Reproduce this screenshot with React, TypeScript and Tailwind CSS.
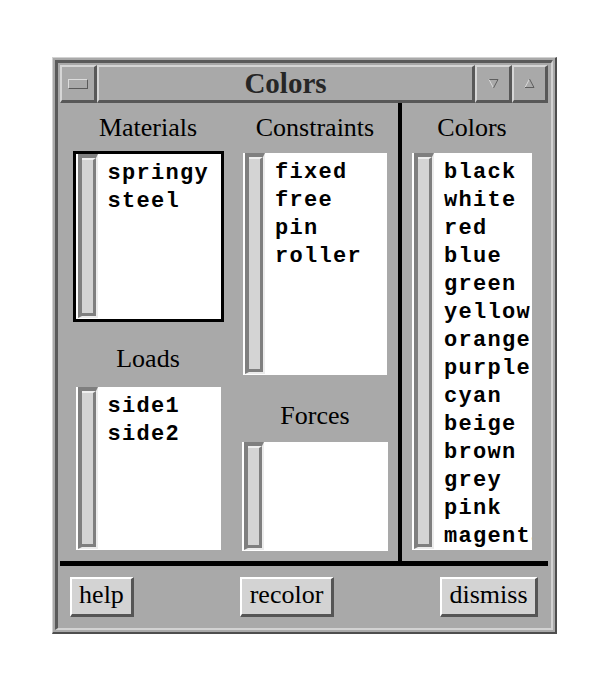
import React from "react";

const serif = "font-['Liberation_Serif','Times_New_Roman',serif]";
const mono = "font-['Liberation_Mono','Courier_New',monospace]";

// raised bevel used by the title bar pieces
const raised =
  "border-t-2 border-l-2 border-t-[#d6d6d6] border-l-[#d6d6d6] border-b-[3px] border-r-[3px] border-b-[#585858] border-r-[#585858]";

function Trough() {
  return (
    <div className="flex w-[20px] shrink-0 mb-[1px] border-t-[4px] border-l-[4px] border-b-[2px] border-r-[2px] border-t-[#7f7f7f] border-l-[#7f7f7f] border-b-[#ececec] border-r-[#ececec]">
      <div className="flex-1 bg-[#d4d4d4] border-t-[2px] border-t-[#efefef] border-r-[3px] border-b-[3px] border-r-[#7f7f7f] border-b-[#7f7f7f]" />
    </div>
  );
}

function ListBody({ items, className }: { items: string[]; className: string }) {
  return (
    <div className={`flex bg-white overflow-hidden ${className}`}>
      <Trough />
      <div className={`pl-[10px] pt-[6px] overflow-hidden whitespace-nowrap ${mono} font-bold text-[22px] leading-[28px] tracking-[1.3px] text-black`}>
        {items.map((it) => (
          <div key={it}>{it}</div>
        ))}
      </div>
    </div>
  );
}

function Label({ children }: { children: React.ReactNode }) {
  return <div className={`${serif} text-[26px] leading-[30px] h-[30px] text-black`}>{children}</div>;
}

function Button({ children, className }: { children: React.ReactNode; className: string }) {
  return (
    <div
      className={`flex items-center justify-center h-[40px] pb-[3px] bg-[#d3d3d3] border-t-2 border-l-2 border-t-white border-l-white border-b-[3px] border-r-[3px] border-b-[#555555] border-r-[#555555] ${serif} text-[26px] leading-[30px] text-black ${className}`}
    >
      {children}
    </div>
  );
}

export default function App() {
  const colors = [
    "black", "white", "red", "blue", "green", "yellow", "orange",
    "purple", "cyan", "beige", "brown", "grey", "pink", "magenta",
  ];

  return (
    <div className="min-h-[693px] bg-white pt-[57px] pl-[52px]">
      {/* window frame */}
      <div className="w-[505px] h-[577px] bg-[#a9a9a9] p-[2px] border-t border-l border-t-[#d2d2d2] border-l-[#d2d2d2] border-b-2 border-r-2 border-b-[#4e4e4e] border-r-[#4e4e4e]">
        <div className="h-full pt-[2px] pl-[2px] pr-[3px] pb-[3px] border-t-[3px] border-l-[3px] border-t-[#5a5a5a] border-l-[#5a5a5a] border-b-2 border-r-2 border-b-[#d2d2d2] border-r-[#d2d2d2]">
          <div className="flex flex-col h-full">
            {/* title bar */}
            <div className="flex h-[38px] shrink-0">
              <div className={`w-[37px] flex items-center justify-center ${raised}`}>
                <div className="w-[20px] h-[10px] border-t border-l border-t-[#dcdcdc] border-l-[#dcdcdc] border-b border-r border-b-[#5a5a5a] border-r-[#5a5a5a]" />
              </div>
              <div className={`flex-1 flex items-center justify-center ${raised}`}>
                <span className={`${serif} font-bold text-[29px] leading-none text-[#262626]`}>Colors</span>
              </div>
              <div className={`w-[37px] flex items-center justify-center ${raised}`}>
                <svg width="11" height="11" viewBox="0 0 11 11">
                  <line x1="1" y1="1.5" x2="10" y2="1.5" stroke="#5e5e5e" strokeWidth="1" />
                  <line x1="1" y1="1.5" x2="5.5" y2="10" stroke="#dadada" strokeWidth="1" />
                  <line x1="10" y1="1.5" x2="5.5" y2="10" stroke="#5e5e5e" strokeWidth="1" />
                </svg>
              </div>
              <div className={`w-[36px] flex items-center justify-center ${raised}`}>
                <svg width="11" height="11" viewBox="0 0 11 11">
                  <line x1="5.5" y1="1" x2="1" y2="9.5" stroke="#dadada" strokeWidth="1" />
                  <line x1="5.5" y1="1" x2="10" y2="9.5" stroke="#5e5e5e" strokeWidth="1" />
                  <line x1="1" y1="9.5" x2="10" y2="9.5" stroke="#5e5e5e" strokeWidth="1" />
                </svg>
              </div>
            </div>

            {/* panels */}
            <div className="flex h-[458px] shrink-0">
              <div className="flex w-[338px]">
                <div className="flex flex-col items-center w-[176px] pt-[10px]">
                  <Label>Materials</Label>
                  <div className="mt-[8px] w-[151px] h-[171px] border-[3px] border-black">
                    <ListBody items={["springy", "steel"]} className="h-full pl-[2px]" />
                  </div>
                  <div className="mt-[22px]">
                    <Label>Loads</Label>
                  </div>
                  <div className="mt-[10px] w-[151px] h-[169px] border-[3px] border-transparent">
                    <ListBody items={["side1", "side2"]} className="h-full pl-[2px]" />
                  </div>
                </div>
                <div className="flex flex-col items-center w-[158px] pt-[10px]">
                  <Label>Constraints</Label>
                  <ListBody items={["fixed", "free", "pin", "roller"]} className="mt-[10px] w-[144px] h-[222px] pl-[2px]" />
                  <div className="mt-[26px]">
                    <Label>Forces</Label>
                  </div>
                  <ListBody items={[]} className="mt-[11px] w-[146px] h-[109px] pl-[2px]" />
                </div>
              </div>
              <div className="w-[4px] bg-black" />
              <div className="flex flex-col items-center w-[146px] pt-[10px] pr-[6px]">
                <Label>Colors</Label>
                <ListBody items={colors} className="mt-[10px] w-[120px] h-[397px] pl-[2px]" />
              </div>
            </div>

            <div className="h-[5px] bg-black shrink-0" />

            {/* button row */}
            <div className="flex justify-between items-start h-[59px] pt-[11px] px-[10px]">
              <Button className="w-[64px]">help</Button>
              <Button className="w-[94px]">recolor</Button>
              <Button className="w-[98px]">dismiss</Button>
            </div>
          </div>
        </div>
      </div>
    </div>
  );
}
